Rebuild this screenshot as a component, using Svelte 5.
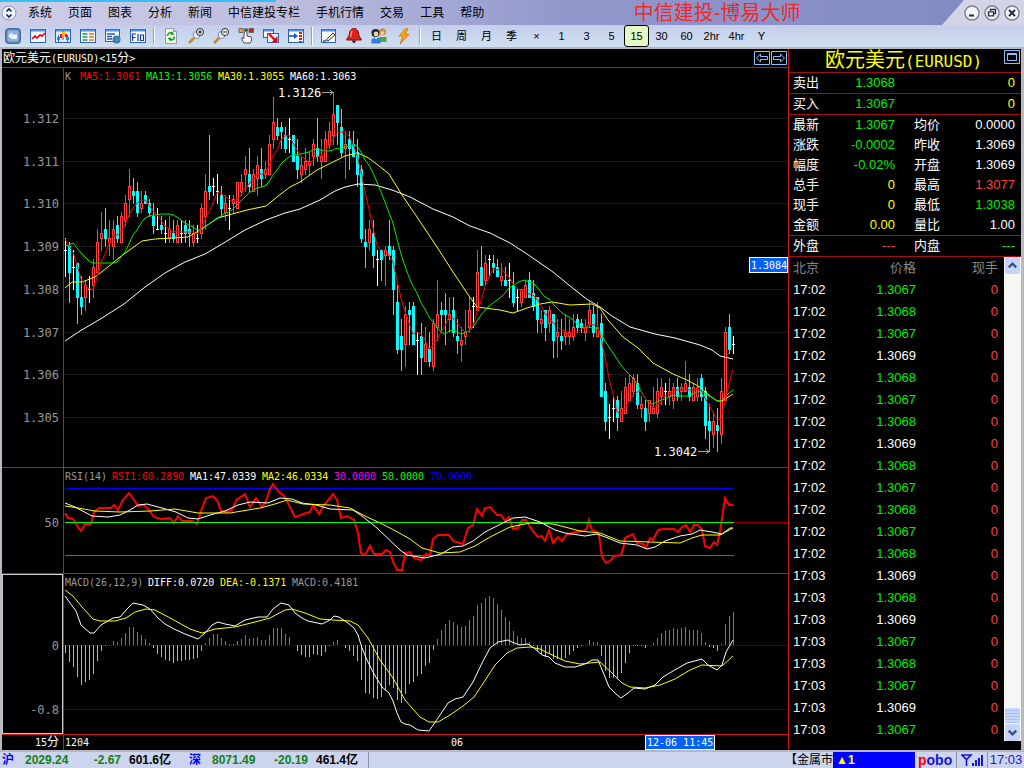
<script>
  // chart space: one candle every 4 units, first one at 65
  const STEP = 4;
  const X0 = 65;

  // u = up, d = down, f = flat, then high.bodyTop.bodyBottom.low in pips over 1.3000
  const bars = `
    f92.89.89.83 d91.90.84.77 f89.85.85.80 d86.86.78.72 d83.78.76.74 u82.81.78.75 f83.80.80.77 u87.85.81.78
    u94.91.84.84 u98.93.92.89 d99.94.92.90 u96.92.91.88 u96.94.90.87 d97.95.92.91 u98.97.91.91 u102.100.96.95
    u108.104.101.97 d106.103.102.100 d105.103.98.97 u103.100.99.98 d103.102.100.100 d101.100.98.97 d100.97.95.93 f99.94.94.94
    d97.95.94.93 f96.93.93.91 u97.94.92.91 d96.93.92.91 u96.95.91.91 f96.93.93.91 d96.95.93.91 d96.94.93.90
    u95.93.91.90 f95.92.92.91 u100.99.93.92 u107.103.97.94 d116.104.103.101 f106.104.104.102 f107.103.103.100 d104.102.99.97
    u102.100.98.96 f102.99.99.94 u102.101.100.98 u105.105.99.99 u107.105.103.102 u111.108.107.103 d113.107.104.103 u108.107.103.103
    u111.109.106.102 d113.108.106.104 u110.108.107.106 u116.114.107.107 u125.119.115.113 d120.118.116.115 d119.118.117.113 d118.116.113.112
    f120.115.115.112 d116.116.110.110 d115.111.108.106 u111.109.107.105 u113.110.108.107 u112.110.109.107 u115.114.111.109 d120.113.111.110
    u115.111.110.106 u117.115.110.110 u119.117.114.113 u126.121.116.114 d123.123.119.114 d122.118.112.111 u117.114.113.106 d117.115.113.108
    d117.114.111.111 d115.112.107.104 d109.108.92.91 d94.91.90.85 u96.94.91.89 d96.93.88.85 f89.87.87.81 d89.89.87.82
    u90.89.88.81 d96.90.88.87 d90.89.80.74 d81.77.66.65 d73.69.66.61 u76.74.67.62 d77.75.74.67 d77.76.67.67
    f70.68.68.60 d72.69.64.60 u71.67.63.63 d70.66.63.62 u73.72.62.61 u82.74.71.68 d77.75.74.70 d79.75.74.67
    u78.74.73.70 d78.75.70.69 d73.69.68.65 u71.68.67.63 u75.70.69.67 u78.75.71.70 f78.76.76.71 u89.84.75.75
    d90.85.81.81 u88.86.82.81 f88.87.87.83 d88.86.85.84 d87.85.83.83 u86.83.82.81 d85.82.81.81 f86.82.82.78
    d84.81.77.76 f80.78.78.75 u80.80.77.76 u82.81.78.78 d84.82.78.78 d82.79.76.75 d78.78.73.70 u75.73.72.70
    d75.75.71.68 u76.75.72.70 d74.74.68.64 u73.70.69.64 d73.69.68.66 u74.70.69.67 u73.70.69.67 u74.71.69.68
    d74.73.71.70 d73.72.71.70 u73.71.70.68 u77.75.72.71 d76.74.70.69 u77.71.69.69 d74.72.55.55 d58.56.49.47
    f53.50.50.45 f55.52.52.49 d55.54.50.47 u56.52.49.49 u59.57.51.51 u60.58.54.54 u60.59.56.55 d60.58.53.52
    u55.53.52.50 d54.52.49.47 u54.54.51.49 u57.52.51.51 u59.56.51.50 u59.57.55.53 f58.56.56.53 u59.56.55.53
    u58.57.54.52 d59.57.55.54 u58.57.56.54 u63.58.56.56 d60.57.55.54 u58.57.54.54 u59.57.55.54 d60.59.55.54
    d57.56.48.45 d53.49.47.42 u51.49.46.43 d52.48.47.42 u59.56.46.44 u71.70.54.54 d74.71.66.65 f69.67.67.65
  `.trim().split(/\s+/).map((s) => {
    const [high, top, bottom, low] = s.slice(1).split('.').map(Number);
    return { kind: s[0], high, top, bottom, low };
  });

  const priceY = (pip) => Math.round(118 + (120 - pip) * 4.27);
  const barX = (i) => X0 + i * STEP;

  // closes before the first visible bar, so the averages start at the left edge
  const history = [80, 80, 92, 92, 91, 92, 92, 92, 92, 92, 93, 92];
  const closes = [...history, ...bars.map((b) => (b.kind === 'u' ? b.top : b.bottom))];

  function average(n) {
    return bars.map((_, i) => {
      const end = i + history.length + 1;
      const sum = closes.slice(end - n, end).reduce((a, b) => a + b, 0);
      return `${barX(i)},${priceY(sum / n)}`;
    }).join(' ');
  }

  const ma5 = average(5);
  const ma13 = average(13);
  const ma30 = '65,288 72,282 82,282 95,277 103,271 120,257 142,241 155,239 188,237 200,230 218,218 232,214 247,210 266,206 277,197 290,187 300,182 317,170 325,166 345,156 357,153 367,157 378,165 389,174 402,195 417,217 437,247 453,272 467,293 477,307 500,310 513,313 530,307 540,304 552,302 570,305 592,304 600,308 608,320 623,337 638,348 653,363 673,374 687,380 700,387 710,396 717,401 722,401 733,394';
  const ma60 = '65,341 80,331 102,318 124,304 145,287 165,273 185,262 205,254 222,244 245,230 266,220 285,213 300,209 320,200 335,191 345,187 358,184 375,185 392,190 410,197 433,209 453,217 470,226 490,233 510,243 527,254 540,263 553,272 575,290 588,300 600,307 612,316 630,327 655,334 675,338 700,345 712,350 720,356 733,359';

  const rsi = '65,513 68,518 73,519 78,527 81,531 85,524 91,524 94,512 99,508 111,508 114,505 118,510 123,500 129,493 134,500 138,506 144,505 148,509 154,517 161,519 170,518 174,523 178,516 182,521 192,521 197,524 201,511 206,498 213,496 217,500 221,511 227,512 232,510 237,499 241,497 245,494 250,507 256,498 262,507 266,501 270,489 273,484 279,492 284,496 289,505 295,517 301,515 306,513 310,512 313,505 319,514 324,505 330,498 333,494 337,500 341,518 347,516 354,520 358,533 361,553 365,555 370,546 374,554 382,554 386,550 390,552 393,562 397,570 402,570 405,553 410,552 414,558 421,560 426,554 430,555 433,539 438,535 449,535 453,541 463,544 468,528 473,525 477,509 482,516 485,508 490,507 497,515 501,515 505,521 509,517 513,529 518,528 522,520 526,520 532,530 538,537 542,536 545,541 549,530 553,543 558,537 562,541 566,535 575,532 584,531 587,528 589,520 592,530 597,532 599,535 602,557 606,563 610,561 614,556 621,555 624,545 625,538 633,534 637,543 643,544 646,548 650,538 653,540 658,530 664,529 674,529 678,532 682,527 686,525 690,532 694,525 698,525 702,530 705,546 710,548 714,542 717,545 720,531 722,518 725,498 729,505 733,505';
  const rsiMa1 = '65,503 75,507 92,516 108,517 120,515 130,510 138,505 147,504 162,508 176,512 188,518 198,519 210,515 225,511 238,505 250,502 268,503 280,498 292,499 302,503 316,505 330,509 353,510 362,516 377,528 400,550 407,555 425,558 441,554 453,547 463,546 473,541 485,532 505,522 513,518 525,517 540,522 555,530 565,533 585,536 597,534 608,538 620,543 637,545 647,549 655,547 665,541 680,536 692,534 700,530 712,532 722,534 730,528 733,528';
  const rsiMa2 = '65,506 78,508 95,511 120,512 150,511 175,509 198,513 230,513 260,508 275,504 287,500 303,504 330,505 350,508 365,516 380,523 392,529 410,539 422,548 440,553 460,552 475,546 490,537 510,527 530,523 553,524 565,527 580,531 600,533 620,541 650,542 680,543 692,538 702,535 720,535 733,528';

  const diff = '65,596 70,603 76,611 81,625 90,633 94,633 101,625 108,621 113,618 120,617 127,609 133,603 143,605 150,609 158,618 165,624 174,629 185,634 198,639 206,632 212,625 218,622 225,624 235,626 245,620 258,617 267,617 273,609 281,603 289,605 295,613 302,618 308,621 322,624 330,620 334,616 339,617 348,623 354,628 358,635 362,648 367,660 374,674 382,687 389,693 393,701 397,713 401,722 405,724 410,725 418,730 429,731 438,718 448,703 455,699 463,697 473,682 482,663 490,648 498,642 508,640 512,642 520,645 528,644 534,648 542,655 549,657 555,663 565,667 575,667 585,664 592,660 598,660 603,672 609,687 616,694 621,698 628,693 634,688 645,689 655,685 663,677 673,671 687,663 702,659 708,665 717,670 722,665 726,652 733,640';
  const dea = '65,590 73,596 82,607 93,619 100,621 115,621 126,618 135,612 146,609 155,610 172,619 190,629 202,633 215,629 235,627 255,622 270,618 285,610 292,609 305,613 320,619 333,620 350,621 358,625 368,638 380,660 393,678 405,700 420,717 429,722 438,722 450,715 463,706 474,697 484,682 495,665 507,653 517,648 530,647 540,649 550,654 565,661 580,664 600,662 612,673 622,683 630,687 645,688 660,685 675,679 690,670 702,665 722,666 733,656';
  const macd = [
    -8, -17, -22, -32, -40, -37, -35, -29, -16, -6, -1, 0, 4, 3, 7, 12, 18, 18, 13, 10, 6, 2, -3, -9,
    -12, -15, -16, -18, -16, -16, -15, -15, -14, -13, -6, 2, 7, 11, 11, 7, 4, 1, 1, 4, 6, 10, 6, 7,
    8, 5, 5, 10, 17, 17, 17, 11, 8, 0, -6, -10, -12, -12, -9, -10, -11, -7, -1, 3, 5, 0, -3, -6,
    -11, -16, -35, -48, -49, -53, -54, -52, -46, -40, -43, -55, -58, -49, -39, -37, -31, -29, -21, -18, -5, 6, 15, 21,
    25, 23, 20, 18, 19, 25, 29, 40, 42, 47, 49, 47, 41, 35, 28, 24, 14, 9, 7, 7, 3, -1, -6, -9,
    -12, -9, -14, -14, -15, -13, -10, -6, -3, -1, 0, 5, 3, 3, -11, -26, -33, -33, -33, -28, -18, -8, -1, -1,
    -1, -3, 0, 2, 7, 12, 14, 15, 17, 16, 17, 18, 15, 15, 15, 12, 3, -2, -3, -6, 1, 21, 29, 33
  ];

  const grid = [120, 110, 100, 90, 80, 70, 60, 50];
  const menus = ['系统', '页面', '图表', '分析', '新闻', '中信建投专栏', '手机行情', '交易', '工具', '帮助'];
  const periods = ['日', '周', '月', '季', '×', '1', '3', '5', '15', '30', '60', '2hr', '4hr', 'Y'];
  let period = $state('15');

  const quotes = [
    ['最新', '1.3067', 'green', '均价', '0.0000', 'white'],
    ['涨跌', '-0.0002', 'green', '昨收', '1.3069', 'white'],
    ['幅度', '-0.02%', 'green', '开盘', '1.3069', 'white'],
    ['总手', '0', 'yellow', '最高', '1.3077', 'red'],
    ['现手', '0', 'yellow', '最低', '1.3038', 'green'],
    ['金额', '0.00', 'yellow', '量比', '1.00', 'white']
  ];

  const ticks = [7, 8, 7, 9, 8, 7, 8, 9, 8, 7, 8, 7, 8, 9, 8, 9, 7, 8, 7, 9, 7].map((n, i) => ({
    time: i < 13 ? '17:02' : '17:03',
    price: '1.306' + n,
    tone: n === 9 ? 'white' : 'green'
  }));
</script>

<div class="app">
  <header>
    <button class="logo" aria-label="菜单">
      <svg viewBox="0 0 16 16" width="16" height="16">
        <circle cx="8" cy="8" r="7" fill="#eef2fb" stroke="#8b93b4" />
        <path d="M5.500 6.500l2.500-2.500 2.500 2.500M5.500 9.500l2.500 2.500 2.500-2.500" fill="none" stroke="#16244f" stroke-width="1.600" />
      </svg>
    </button>
    <nav>
      {#each menus as item}
        <button>{item}</button>
      {/each}
    </nav>
    <h1>中信建投-博易大师</h1>
    <div class="window">
      <button aria-label="最小化">
        <svg viewBox="0 0 16 16" width="16" height="16"><circle cx="8" cy="8" r="7" fill="#f3f4f8" stroke="#7a7f92" stroke-width="1.4" /><path d="M5 10.5h5" stroke="#222c44" stroke-width="1.8" /></svg>
      </button>
      <button aria-label="还原">
        <svg viewBox="0 0 16 16" width="16" height="16"><circle cx="8" cy="8" r="7" fill="#f3f4f8" stroke="#7a7f92" stroke-width="1.4" /><path d="M6.5 6V4.5h5v4H10M4.5 6.8h5v4h-5z" fill="none" stroke="#222c44" stroke-width="1.3" /></svg>
      </button>
      <button aria-label="关闭">
        <svg viewBox="0 0 16 16" width="16" height="16"><circle cx="8" cy="8" r="7" fill="#f3f4f8" stroke="#7a7f92" stroke-width="1.4" /><path d="M5 5l6 6M11 5l-6 6" stroke="#222c44" stroke-width="2" /></svg>
      </button>
    </div>
  </header>

  <div class="toolbar">
    <button aria-label="返回"><svg viewBox="0 0 16 16"><rect x="0.5" y="0.5" width="15" height="15" rx="3" fill="#5f86b8" stroke="#41689c" /><rect x="2.5" y="2.5" width="11" height="11" rx="2" fill="#8fb4dc" /><path d="M3 8l4-4v2.5h5V11H7" fill="#e8f3ff" /></svg></button>
    <button aria-label="分时图"><svg viewBox="0 0 16 16"><rect x="0.5" y="1.5" width="15" height="13" fill="#f4f8ff" stroke="#2a62b4" /><path d="M1 2.5h14" stroke="#4f90e4" stroke-width="2" /><path d="M2 11l3-3 2 2 3-3 2 1 3-3" fill="none" stroke="#e00" stroke-width="1.6" /></svg></button>
    <button aria-label="K线图"><svg viewBox="0 0 16 16"><rect x="0.5" y="1.5" width="15" height="13" fill="#dcecff" stroke="#2a62b4" /><path d="M1 2.5h14" stroke="#4f90e4" stroke-width="2" /><path d="M3.500 7v7M12.500 7v7" stroke="#27c" /><path d="M2 9h3v3H2zM11 9h3v3h-3z" fill="#2f7fe8" /><path d="M5 6h2v4H5z" fill="#e11" /><path d="M8 3v9" stroke="#d20" /><path d="M7 4h3v4H7z" fill="#fb0" /><path d="M10 6h2v3h-2z" fill="#e11" /></svg></button>
    <button aria-label="报价表"><svg viewBox="0 0 16 16"><rect x="0.5" y="1.5" width="15" height="13" fill="#f8fbff" stroke="#2a62b4" /><path d="M1 2.5h14" stroke="#4f90e4" stroke-width="2" /><path d="M2.500 6h5M2.500 9h5M2.500 12h5" stroke="#2a9a3a" stroke-width="1.400" /><path d="M9 6h5M9 9h5M9 12h5" stroke="#e07820" stroke-width="1.400" /></svg></button>
    <button aria-label="资讯"><svg viewBox="0 0 16 16"><rect x="0.5" y="1.5" width="14" height="12" fill="#f8fbff" stroke="#2a62b4" /><path d="M1 2.500h13" stroke="#4f90e4" stroke-width="2" /><path d="M2 6h8M2 8.500h5M2 11h5" stroke="#2458b0" stroke-width="1.300" /><circle cx="11.500" cy="11.500" r="4" fill="#3a78c8" /><path d="M9 10c2-2 3 0 2 2s3 1 3-1" fill="#4ab04a" /></svg></button>
    <button aria-label="F10"><svg viewBox="0 0 16 16"><rect x="0.5" y="1.500" width="15" height="13" fill="#f8fbff" stroke="#2a62b4" /><path d="M1 2.500h14" stroke="#4f90e4" stroke-width="2" /><path d="M2.500 13V6h3.500M2.500 9.500h3M8 6v7M10.500 7h3v5.500h-3z" fill="none" stroke="#163c8c" stroke-width="1.200" /></svg></button>
    <i></i>
    <button aria-label="刷新"><svg viewBox="0 0 16 16"><path d="M2.500 0.500h8l3 3v12h-11z" fill="#fffde8" stroke="#8a98b8" /><path d="M10.500 0.500v3h3" fill="#cde" stroke="#8a98b8" /><path d="M4.500 8c0-3 3-4 5-2.500M11.500 8.500c0 3-3 4-5 2.500" fill="none" stroke="#159a28" stroke-width="1.600" /><path d="M8.500 3l3 3.500-4 .5zM7.500 13.500l-3-3.500 4-.5z" fill="#159a28" /></svg></button>
    <button aria-label="放大"><svg viewBox="0 0 16 16"><path d="M1 15l6-6" stroke="#c88838" stroke-width="2.600" /><circle cx="8.500" cy="7" r="3.500" fill="#d8ecff" stroke="#8a93a8" /><circle cx="12" cy="4" r="3.500" fill="#fff" stroke="#222" /><path d="M10 4h4M12 2v4" stroke="#111" /></svg></button>
    <button aria-label="缩小"><svg viewBox="0 0 16 16"><path d="M1 15l6-6" stroke="#c88838" stroke-width="2.600" /><circle cx="8.500" cy="7" r="3.500" fill="#d8ecff" stroke="#8a93a8" /><circle cx="12" cy="4" r="3.500" fill="#fff" stroke="#222" /><path d="M10 4h4" stroke="#111" /></svg></button>
    <button aria-label="选择"><svg viewBox="0 0 16 16"><path d="M1 0.500h4v4H1z" fill="#f5a623" stroke="#666" /><path d="M6 0.500h4v3H6z" fill="#555" /><path d="M11 0.500h4.500v4H11z" fill="#e01515" stroke="#666" /><path d="M7 4c1-1 2 0 2 1v3l4 1c1 1 1 4-1 6H6C5 13 3 11 4 9.500l2 1V5z" fill="#fff" stroke="#333" stroke-width=".9" /></svg></button>
    <button aria-label="画线"><svg viewBox="0 0 16 16"><rect x="0.500" y="1.500" width="10" height="8" fill="#f8fbff" stroke="#2a62b4" /><path d="M1 2.500h9" stroke="#4f90e4" stroke-width="2" /><rect x="4.500" y="5.500" width="11" height="9" fill="#e4f0ff" stroke="#2a62b4" /><path d="M6 6l6 6" stroke="#e00" stroke-width="2.200" /><path d="M14.500 14.500V8l-6 6.500z" fill="#e00" /></svg></button>
    <button aria-label="右移"><svg viewBox="0 0 16 16"><rect x="0.500" y="1.500" width="15" height="13" fill="#f8fbff" stroke="#2a62b4" /><path d="M1 2.500h14" stroke="#4f90e4" stroke-width="2" /><path d="M1 8h6" stroke="#1c55c8" stroke-width="1.600" /><path d="M6 5l4 3-4 3z" fill="#1c55c8" /><path d="M12.500 4v10" stroke="#e11" stroke-width="3" stroke-dasharray="2 1" /></svg></button>
    <i></i>
    <button aria-label="编辑"><svg viewBox="0 0 16 16"><rect x="0.500" y="1.500" width="14" height="13" fill="#f8fbff" stroke="#2a62b4" /><path d="M1 2.500h13" stroke="#4f90e4" stroke-width="2" /><path d="M5 12l7-7 2 2-7 6z" fill="#fff0a0" stroke="#223a80" /><path d="M2 13h3" stroke="#223a80" stroke-width="1.300" /></svg></button>
    <button aria-label="预警"><svg viewBox="0 0 16 16"><path d="M8 0.500c4 0 4.500 4 5 7l2.500 4.500h-15L3 7.500c.5-3 1-7 5-7z" fill="#e02020" stroke="#8a1010" /><path d="M6 3c-1 2-1 4-1.500 6" fill="none" stroke="#ff9a9a" stroke-width="1.400" /><path d="M5.500 12.500h5l-2.500 3z" fill="#4a1010" /></svg></button>
    <button aria-label="用户"><svg viewBox="0 0 16 16"><circle cx="11.500" cy="4" r="3.500" fill="#c09040" /><circle cx="11.500" cy="5" r="2" fill="#f4cf98" /><path d="M8 14V9h7.500v5z" fill="#4aa848" /><circle cx="4.500" cy="5" r="4" fill="#223" /><circle cx="5" cy="6" r="2.400" fill="#f4cf98" /><path d="M0.500 15.500v-4l3-2 1.500 2 2-2 2.500 2v4z" fill="#2f7fd8" /></svg></button>
    <button aria-label="闪电"><svg viewBox="0 0 16 16"><path d="M10 0L3 8h4l-3 8 9-9.500H9L12 1z" fill="#ffa810" stroke="#d06c00" stroke-width=".8" /></svg></button>
    <i></i>
    {#each periods as p}
      <button class="period" class:active={p === period} onclick={() => (period = p)}>{p}</button>
    {/each}
  </div>

  <main>
    <section class="charts">
      <div class="chart-title">
        <h2>欧元美元<span>(EURUSD)&lt;15</span>分<span>&gt;</span></h2>
        <button aria-label="上一个"><svg viewBox="0 0 16 14" width="16" height="14"><path d="M.5.5h15v13H.5z M2.500 7l4-4v2.500h7v3h-7V11z" fill="none" stroke="#8cc0ff" /></svg></button>
        <button aria-label="下一个"><svg viewBox="0 0 16 14" width="16" height="14"><path d="M.5.5h15v13H.5z M13.500 7l-4-4v2.500h-7v3h7V11z" fill="none" stroke="#8cc0ff" /></svg></button>
      </div>

      <svg class="pane" viewBox="2 68 786 399">
        {#each grid as g}
          <line class="grid" x1="65" x2="788" y1={priceY(g) + 0.5} y2={priceY(g) + 0.5} />
          <text class="tick" x="59" y={priceY(g) + 5}>1.3{g < 100 ? '0' + g / 10 : g / 10}</text>
        {/each}
        <line class="frame" x1="63.5" x2="63.5" y1="68" y2="467" />
        <g shape-rendering="crispEdges">
          {#each bars as b, i}
            <rect class={b.kind} x={barX(i)} y={priceY(b.high)} width="1" height={priceY(b.low) - priceY(b.high) + 1} />
            {#if b.kind === 'f'}
              <rect class="f" x={barX(i) - 1} y={priceY(b.top)} width="3" height="1" />
            {:else}
              <rect class={b.kind} x={barX(i) - 1} y={priceY(b.top)} width="3" height={priceY(b.bottom) - priceY(b.top) + 1} />
              {#if b.kind === 'u'}
                <rect x={barX(i)} y={priceY(b.top) + 1} width="1" height={priceY(b.bottom) - priceY(b.top) - 1} />
              {/if}
            {/if}
          {/each}
        </g>
        <polyline points={ma60} stroke="#fff" />
        <polyline points={ma30} stroke="#ff0" />
        <polyline points={ma13} stroke="#0e0" />
        <polyline points={ma5} stroke="#f00" />
        <text class="legend" y="80">
          <tspan x="65" fill="#999">K</tspan><tspan x="80" fill="#f00">MA5:1.3061</tspan><tspan x="146" fill="#0f0">MA13:1.3056</tspan><tspan x="218" fill="#ff0">MA30:1.3055</tspan><tspan x="290" fill="#fff">MA60:1.3063</tspan>
        </text>
        <text class="mark" x="278" y="97">1.3126</text>
        <path class="arrow" d="M322 92.500h11M330 90l3 2.500-3 2.500" />
        <text class="mark" x="654" y="456">1.3042</text>
        <path class="arrow" d="M698 451.500h11M706 449l3 2.500-3 2.500" />
        <rect class="cursor" x="749.5" y="257.5" width="38" height="15" />
        <text class="legend" x="751" y="269" fill="#fff">1.3084</text>
      </svg>

      <svg class="pane" viewBox="2 468 786 105">
        <text class="tick" x="59" y="527">50</text>
        <line class="frame" x1="63.5" x2="63.5" y1="468" y2="573" />
        <line class="grid" x1="734" x2="788" y1="522.5" y2="522.5" />
        <line x1="65" x2="734" y1="488.5" y2="488.5" stroke="#00f" />
        <line x1="65" x2="734" y1="555.5" y2="555.5" stroke="#f0f" />
        <polyline points={rsi} stroke="#f00" stroke-width="2" />
        <line x1="65" x2="734" y1="522.5" y2="522.5" stroke="#0f0" />
        <polyline points={rsiMa1} stroke="#fff" />
        <polyline points={rsiMa2} stroke="#ff0" />
        <text class="legend" y="480">
          <tspan x="65" fill="#999">RSI(14)</tspan><tspan x="112" fill="#f00">RSI1:60.2890</tspan><tspan x="190" fill="#fff">MA1:47.0339</tspan><tspan x="262" fill="#ff0">MA2:46.0334</tspan><tspan x="334" fill="#f0f">30.0000</tspan><tspan x="382" fill="#0f0">50.0000</tspan><tspan x="430" fill="#00f">70.0000</tspan>
        </text>
      </svg>

      <svg class="pane" viewBox="2 574 786 160">
        <rect x="2.5" y="574.5" width="60" height="159" fill="none" stroke="#ccc" />
        <text class="tick" x="59" y="650">0</text>
        <text class="tick" x="59" y="714">-0.8</text>
        <line class="frame" x1="63.5" x2="63.5" y1="574" y2="734" />
        <line class="grid" x1="65" x2="788" y1="645.5" y2="645.5" />
        <line class="grid" x1="65" x2="788" y1="709.5" y2="709.5" />
        <g shape-rendering="crispEdges">
          {#each macd as v, i}
            <rect class={v > 0 ? 'u' : 'd'} x={barX(i)} y={v > 0 ? 645 - v : 645} width="1" height={Math.abs(v)} />
          {/each}
        </g>
        <polyline points={diff} stroke="#fff" />
        <polyline points={dea} stroke="#ff0" />
        <text class="legend" y="586">
          <tspan x="65" fill="#999">MACD(26,12,9)</tspan><tspan x="148" fill="#fff">DIFF:0.0720</tspan><tspan x="220" fill="#ff0">DEA:-0.1371</tspan><tspan x="292" fill="#999">MACD:0.4181</tspan>
        </text>
      </svg>

      <svg class="pane time" viewBox="2 735 786 15">
        <line class="frame" x1="63.5" x2="63.5" y1="735" y2="750" />
        <text class="legend" x="35" y="746" fill="#fff">15<tspan class="cjk">分</tspan></text>
        <text class="legend" x="65" y="746" fill="#fff">1204</text>
        <text class="legend" x="451" y="746" fill="#fff">06</text>
        <rect class="cursor" x="645.5" y="735.5" width="69" height="14" />
        <text class="legend" x="647" y="746" fill="#fff">12-06 11:45</text>
      </svg>
    </section>

    <aside>
      <div class="symbol">
        <h2>欧元美元<span>(EURUSD)</span></h2>
        <button aria-label="最大化"><svg viewBox="0 0 16 14" width="16" height="14"><path d="M.5.5h15v13H.5z" fill="none" stroke="#8cc0ff" /><path d="M3.500 3.500h9v7h-9zM3 4.500h10" fill="none" stroke="#8cc0ff" /></svg></button>
      </div>
      <table class="quote">
        <tbody>
          <tr class="ruled"><th>卖出</th><td class="green">1.3068</td><th></th><td class="yellow">0</td></tr>
          <tr class="ruled"><th>买入</th><td class="green">1.3067</td><th></th><td class="yellow">0</td></tr>
          {#each quotes as [a, av, at, b, bv, bt], i}
            <tr class:ruled={i === quotes.length - 1}>
              <th>{a}</th><td class={at}>{av}</td><th>{b}</th><td class={bt}>{bv}</td>
            </tr>
          {/each}
          <tr class="ruled"><th>外盘</th><td class="red">---</td><th>内盘</th><td class="green">---</td></tr>
        </tbody>
      </table>
      <div class="trades">
        <table>
          <thead>
            <tr><th>北京</th><th>价格</th><th>现手</th></tr>
          </thead>
          <tbody>
            {#each ticks as t}
              <tr><td>{t.time}</td><td class={t.tone}>{t.price}</td><td class="red">0</td></tr>
            {/each}
          </tbody>
        </table>
        <div class="scroll">
          <button aria-label="向上"><svg viewBox="0 0 16 16"><path d="M4 10l4-4 4 4" fill="none" stroke="#3c5078" stroke-width="2.400" /></svg></button>
          <span></span>
          <button aria-label="向下"><svg viewBox="0 0 16 16"><path d="M4 6l4 4 4-4" fill="none" stroke="#3c5078" stroke-width="2.400" /></svg></button>
        </div>
      </div>
    </aside>
  </main>

  <footer>
    <div class="index">
      <b class="name">沪</b><b class="fall last">2029.24</b><b class="fall change">-2.67</b><b class="amount">601.6亿</b>
    </div>
    <div class="index">
      <b class="name">深</b><b class="fall last">8071.49</b><b class="fall change">-20.19</b><b class="amount">461.4亿</b>
    </div>
    <div class="fill"></div>
    <div class="news">【金属市</div>
    <div class="alert">▲1</div>
    <div class="brand"><span>p</span>obo</div>
    <div class="signal">
      <svg viewBox="0 0 22 12" width="22" height="12"><path d="M1 1h9L5.500 5.500zM5.500 5v7" fill="none" stroke="#1616d8" stroke-width="1.600" /><path d="M11 9h2v3h-2zM14 6h2v6h-2zM17 4h2v8h-2zM20 1h2v11h-2z" fill="#1616d8" /></svg>
    </div>
    <div class="clock">17:03</div>
  </footer>
</div>

<style>
  :global(body) {
    background: #000;
  }

  .app {
    min-height: 100vh;
    display: flex;
    flex-direction: column;
    font: 12px/16px "Liberation Sans", "Noto Sans CJK SC", sans-serif;
    color: #fff;
  }

  button {
    background: none;
    border: 0;
    padding: 0;
    margin: 0;
    color: inherit;
    font: inherit;
  }

  h1,
  h2 {
    margin: 0;
    font-weight: normal;
  }

  svg {
    display: block;
  }

  header {
    height: 25px;
    display: flex;
    align-items: center;
    color: #000;
    background:
      linear-gradient(#35c0f4, #35c0f4) 0 0 / 27% 2px no-repeat,
      linear-gradient(90deg, #cfcfe8, #b9bbde 30%, #9297cb 55%, #7f8ac2);
  }

  .logo {
    width: 20px;
    padding-left: 1px;
  }

  nav {
    display: flex;
  }

  nav button {
    padding: 0 8px;
    white-space: nowrap;
  }

  h1 {
    flex: 1;
    text-align: center;
    font-size: 20px;
    line-height: 24px;
    color: #f02828;
    white-space: nowrap;
  }

  .window {
    align-self: stretch;
    display: flex;
    align-items: center;
    gap: 4px;
    padding: 0 4px 0 22px;
    background: #d3d5e6;
    clip-path: polygon(22px 0, 100% 0, 100% 100%, 0 100%);
  }

  .toolbar {
    height: 23px;
    display: flex;
    align-items: center;
    background: linear-gradient(#c5cdeb, #cfe0f0);
    border-bottom: 1px solid #b4b8c4;
    box-sizing: border-box;
    color: #000;
  }

  .toolbar button {
    width: 25px;
    height: 22px;
    box-sizing: border-box;
    display: flex;
    align-items: center;
    justify-content: center;
    font-size: 11px;
  }

  .toolbar svg {
    width: 16px;
    height: 16px;
  }

  .toolbar i {
    width: 1px;
    height: 18px;
    margin: 0 3px;
    border-right: 1px solid #fff;
    background: #9aa0b4;
  }

  .toolbar .active {
    background: #e4f8c4;
    border: 1px solid #000;
    border-radius: 3px;
  }

  main {
    flex: 1;
    display: grid;
    grid-template-columns: minmax(0, 1fr) 232px;
    border: solid #b8b8c0;
    border-width: 1px 3px 2px 2px;
    background: #000;
  }

  .charts {
    border-right: 1px solid #d01414;
  }

  .chart-title {
    height: 18px;
    display: flex;
    align-items: center;
    gap: 1px;
    padding-right: 1px;
    border-bottom: 1px solid #d01414;
  }

  .chart-title h2 {
    flex: 1;
    font-size: 12px;
    padding-left: 1px;
  }

  .chart-title span {
    font: 10px "DejaVu Sans Mono", monospace;
  }

  .pane {
    width: 100%;
    border-bottom: 1px solid #d01414;
  }

  .time {
    border-bottom: 0;
  }

  .pane text {
    font: 10px "DejaVu Sans Mono", "Noto Sans CJK SC", monospace;
  }

  .pane .tick {
    font-size: 12px;
    text-anchor: end;
    fill: #999;
  }

  .pane .mark {
    font-size: 12px;
    fill: #fff;
  }

  .pane .cjk {
    font-size: 12px;
  }

  .pane polyline {
    fill: none;
  }

  .grid {
    stroke: #a00000;
    stroke-dasharray: 1 1;
    shape-rendering: crispEdges;
  }

  .frame {
    stroke: #d01414;
  }

  .arrow {
    fill: none;
    stroke: #aaa;
  }

  .cursor {
    fill: #0060f8;
    stroke: #fff;
  }

  .u {
    fill: #ff4040;
  }

  .d {
    fill: #0ff;
  }

  .f {
    fill: #fff;
  }

  aside {
    font-size: 13px;
  }

  .symbol {
    height: 23px;
    display: flex;
    align-items: flex-start;
    padding: 0 1px 0 36px;
    border-bottom: 1px solid #a01010;
    color: #ff0;
  }

  .symbol h2 {
    flex: 1;
    font-size: 20px;
    line-height: 23px;
    white-space: nowrap;
  }

  .symbol h2 span {
    font: 16px "DejaVu Sans Mono", monospace;
  }

  .symbol button {
    padding-top: 1px;
  }

  table {
    width: 100%;
    border-collapse: separate;
    border-spacing: 0;
    table-layout: fixed;
  }

  th,
  td {
    padding: 0;
    font-weight: normal;
    line-height: 20px;
  }

  .quote th {
    width: 43px;
    text-align: left;
  }

  .quote th:first-child {
    width: 39px;
    padding-left: 4px;
  }

  .quote td {
    text-align: right;
    padding-right: 6px;
  }

  .quote td:nth-child(2) {
    width: 63px;
    padding-right: 19px;
  }

  .quote .ruled th,
  .quote .ruled td {
    border-bottom: 1px solid #a01010;
    height: 20px;
  }

  .trades {
    display: flex;
    align-items: flex-start;
  }

  .trades table {
    flex: 1;
  }

  .trades th {
    color: #888;
    line-height: 22px;
  }

  .trades td {
    line-height: 22px;
  }

  .trades th:nth-child(1),
  .trades td:nth-child(1) {
    width: 46px;
    padding-left: 4px;
    text-align: left;
  }

  .trades th:nth-child(2),
  .trades td:nth-child(2) {
    width: 77px;
    text-align: right;
  }

  .trades th:nth-child(3),
  .trades td:nth-child(3) {
    padding-right: 6px;
    text-align: right;
  }

  .scroll {
    align-self: stretch;
    width: 17px;
    display: flex;
    flex-direction: column;
    align-items: center;
    gap: 1px;
    background: #f6f6f2;
  }

  .scroll button {
    width: 15px;
    height: 17px;
    background: #c4d4fa;
    border-radius: 2px;
  }

  .scroll span {
    width: 15px;
    height: 15px;
    margin-top: auto;
    border-radius: 2px;
    background: repeating-linear-gradient(#c8d6fb 0 2px, #aebef0 2px 3px);
  }

  .green {
    color: #0e0;
  }

  .red {
    color: #ff4040;
  }

  .yellow {
    color: #ff0;
  }

  .white {
    color: #fff;
  }

  footer {
    height: 16px;
    display: flex;
    background: #cdd5ee;
    color: #000;
    white-space: nowrap;
  }

  .index {
    width: 187px;
    display: flex;
    padding-left: 2px;
    box-sizing: border-box;
  }

  .index:nth-child(2) {
    width: 182px;
    border-right: 1px solid #8a90a8;
  }

  .name {
    width: 23px;
    color: #00f;
  }

  .fall {
    color: #108020;
  }

  .last {
    width: 44px;
  }

  .change {
    width: 52px;
    text-align: right;
  }

  .amount {
    padding-left: 8px;
  }

  .fill {
    flex: 1;
  }

  .alert {
    width: 79px;
    padding-left: 3px;
    background: #00f;
    color: #ff0;
    font-weight: bold;
  }

  .brand {
    width: 38px;
    padding-left: 3px;
    border-right: 1px solid #8a90a8;
    color: #1616d8;
    font-size: 14px;
    font-weight: bold;
  }

  .brand span {
    color: #f00;
  }

  .signal {
    display: flex;
    align-items: center;
    padding: 0 4px;
    border-right: 1px solid #8a90a8;
  }

  .clock {
    width: 36px;
    text-align: center;
    color: #1616d8;
    font-size: 13px;
  }
</style>
